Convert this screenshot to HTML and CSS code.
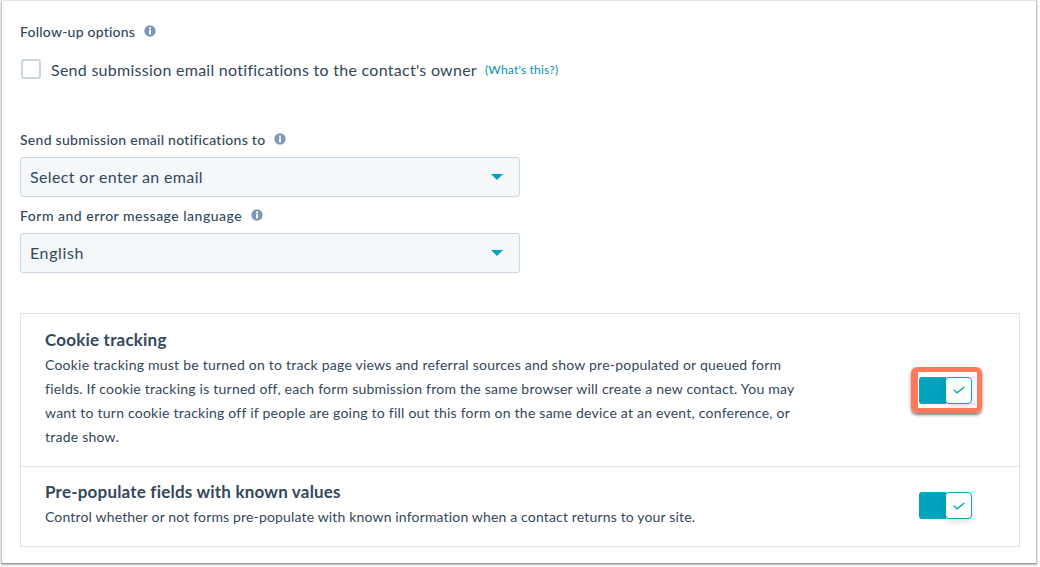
FILE: index.html
```html
<!DOCTYPE html>
<html lang="en">
<head>
<meta charset="utf-8">
<title>Form options</title>
<link rel="stylesheet" href="styles.css">
</head>
<body>
<main class="window">
  <div class="label-row first">
    <span class="label">Follow-up options</span>
    <svg class="info" viewBox="0 0 12 12"><circle cx="6" cy="6" r="5.7" fill="#7c98b6"/><rect x="5" y="5" width="2" height="4.4" fill="#fff"/><rect x="5" y="2.5" width="2" height="1.7" fill="#fff"/></svg>
  </div>
  <div class="check-row">
    <span class="checkbox"></span>
    <span class="check-text">Send submission email notifications to the contact's owner</span>
    <a class="link">(What's this?)</a>
  </div>
  <div class="label-row second">
    <span class="label label-send">Send submission email notifications to</span>
    <svg class="info" viewBox="0 0 12 12"><circle cx="6" cy="6" r="5.7" fill="#7c98b6"/><rect x="5" y="5" width="2" height="4.4" fill="#fff"/><rect x="5" y="2.5" width="2" height="1.7" fill="#fff"/></svg>
  </div>
  <div class="select">
    <span>Select or enter an email</span>
    <span class="caret"></span>
  </div>
  <div class="label-row third">
    <span class="label label-lang">Form and error message language</span>
    <svg class="info" viewBox="0 0 12 12"><circle cx="6" cy="6" r="5.7" fill="#7c98b6"/><rect x="5" y="5" width="2" height="4.4" fill="#fff"/><rect x="5" y="2.5" width="2" height="1.7" fill="#fff"/></svg>
  </div>
  <div class="select">
    <span class="select-wide">English</span>
    <span class="caret"></span>
  </div>
  <section class="card">
    <div class="card-row cookie">
      <div class="card-text">
        <h2>Cookie tracking</h2>
        <p>Cookie tracking must be turned on to track page views and referral sources and show pre-populated or queued form fields. If cookie tracking is turned off, each form submission from the same browser will create a new contact. You may want to turn cookie tracking off if people are going to fill out this form on the same device at an event, conference, or trade show.</p>
      </div>
      <div class="toggle highlighted">
        <span class="track"></span>
        <span class="knob"><svg viewBox="0 0 12 8"><path d="M.6 3.6 4 6.8 11.4 1" fill="none" stroke="#00a4bd" stroke-width="1.3"/></svg></span>
      </div>
    </div>
    <div class="card-row prepop">
      <div class="card-text">
        <h2>Pre-populate fields with known values</h2>
        <p class="tight">Control whether or not forms pre-populate with known information when a contact returns to your site.</p>
      </div>
      <div class="toggle">
        <span class="track"></span>
        <span class="knob"><svg viewBox="0 0 12 8"><path d="M.6 3.6 4 6.8 11.4 1" fill="none" stroke="#00a4bd" stroke-width="1.3"/></svg></span>
      </div>
    </div>
  </section>
</main>
</body>
</html>
```
FILE: styles.css
```css
* { box-sizing: border-box; }
html, body { margin: 0; padding: 0; background: #fff; }
body { width: 1040px; height: 567px; overflow: hidden; font-family: "Lato", "Liberation Sans", sans-serif; color: #33475b; }
.window {
  width: 1036px;
  height: 564px;
  margin-left: 1px;
  padding: 0 17px 0 18px;
  background: #fff;
  border-left: 1px solid #c4c4c4;
  border-right: 1px solid #c4c4c4;
  border-bottom: 1px solid #9a9a9a;
  border-top: 1px solid #e6e6e6;
  box-shadow: 0 1px 2px rgba(0,0,0,.3);
}
.label-row { display: flex; align-items: center; gap: 9px; height: 20px; }
.first { margin-top: 20px; }
.second { margin-top: 49px; }
.third { margin-top: 8px; }
.label { font-size: 14px; font-weight: 500; color: #33475b; letter-spacing: .22px; }
.label-send { letter-spacing: .27px; }
.label-lang { letter-spacing: .5px; }
.info { width: 12px; height: 12px; flex: none; }
.check-row { display: flex; align-items: center; height: 22px; margin-top: 17px; padding-left: 1px; }
.checkbox { width: 20px; height: 20px; border: 2px solid #cbd6e2; border-radius: 3px; background: #fff; flex: none; }
.check-text { font-size: 16px; margin-left: 10px; letter-spacing: .27px; }
.link { font-size: 12px; color: #0091ae; margin-left: 8px; letter-spacing: .2px; }
.select {
  width: 500px; height: 40px; margin-top: 8px;
  display: flex; align-items: center; justify-content: space-between;
  padding: 0 16px 2px 9px;
  background: #f5f8fa;
  border: 1px solid #cbd6e2;
  border-radius: 3px;
  font-size: 16px;
  letter-spacing: .35px;
}
.select-wide { letter-spacing: .6px; }
.caret { width: 0; height: 0; margin-top: 2px; border-left: 6px solid transparent; border-right: 6px solid transparent; border-top: 6px solid #00a4bd; }
.card { width: 1000px; margin-top: 40px; border: 1px solid #dfe3eb; }
.card-row { display: flex; justify-content: space-between; align-items: center; padding: 0 47px 0 24px; }
.cookie { height: 153px; border-bottom: 1px solid #dfe3eb; }
.prepop { height: 79px; }
.card-text { width: 760px; }
.cookie .card-text { padding-bottom: 3px; }
.prepop .card-text { padding-bottom: 4px; }
.prepop .toggle { margin-bottom: 2px; }
h2 { margin: 0 0 2px; font-size: 17px; line-height: 22px; font-weight: 700; color: #33475b; letter-spacing: .2px; }
p { margin: 0; font-size: 14px; line-height: 24px; color: #33475b; letter-spacing: .23px; }
.tight { letter-spacing: .16px; }
.toggle { display: flex; width: 53px; height: 27px; position: relative; flex: none; }
.track { width: 27px; background: #00a4bd; border-radius: 3px 0 0 3px; }
.knob { width: 27px; height: 27px; margin-left: -1px; display: flex; align-items: center; justify-content: center; background: #fff; border: 1px solid #00a4bd; border-radius: 4px; box-shadow: 0 3px 6px rgba(0,0,0,.12); }
.knob svg { width: 12px; height: 8px; }
.highlighted::after { content: ""; position: absolute; top: -10px; right: -10px; bottom: -9px; left: -8px; border: 5px solid #ff7a59; border-left-width: 7px; border-radius: 6px; box-shadow: 0 2px 3px rgba(0,0,0,.5); }
```
